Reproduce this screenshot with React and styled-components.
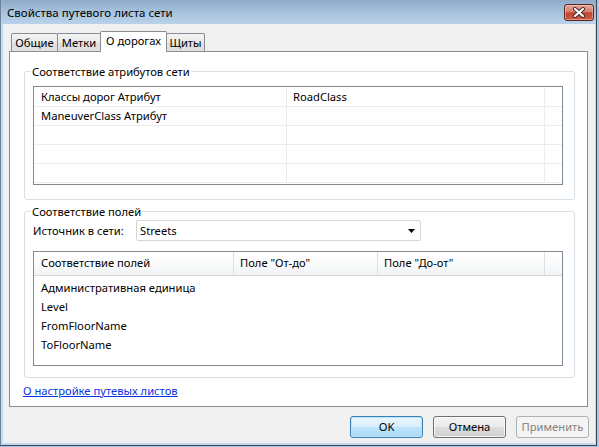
import React from "react";
import styled, { createGlobalStyle, css } from "styled-components";

const GlobalStyle = createGlobalStyle`
  html, body {
    margin: 0;
    padding: 0;
  }
  body {
    background: #a9c7e5;
    font-family: "Noto Sans", "Open Sans", "DejaVu Sans", sans-serif;
    font-size: 11.2px;
    color: #000;
  }
`;

const Frame = styled.div`
  width: 597px;
  height: 446px;
  box-sizing: border-box;
  display: flex;
  flex-direction: column;
  background: #c3d9ef;
  border-left: 1px solid #6f849a;
  border-right: 1px solid #3b4652;
  border-bottom: 1px solid #3b4652;
`;

const TitleBar = styled.div`
  height: 24px;
  flex: 0 0 24px;
  display: flex;
  justify-content: space-between;
  align-items: flex-start;
  padding: 0 2px 0 6px;
  background: linear-gradient(to bottom, #8fabc9 0%, #a9c4df 55%, #bad2ea 100%);
`;

const Title = styled.div`
  margin-top: 5px;
  line-height: 16px;
  font-size: 11.5px;
`;

const CloseButton = styled.div`
  margin-top: 4px;
  width: 30px;
  height: 17px;
  box-sizing: border-box;
  border: 1px solid #5a2626;
  border-radius: 3px;
  display: flex;
  align-items: center;
  justify-content: center;
  background: linear-gradient(to bottom, #e6a597 0%, #d8806f 45%, #c4442f 52%, #cd5a43 100%);
  box-shadow: inset 0 0 0 1px rgba(255, 220, 210, 0.45);
`;

const Body = styled.div`
  flex: 1;
  margin: 0 1px 2px 2px;
  padding: 7px 7px 0 6px;
  background: #f0f0f0;
  display: flex;
  flex-direction: column;
`;

const TabStrip = styled.div`
  display: flex;
  align-items: flex-end;
  height: 20px;
  padding-left: 2px;
  position: relative;
  z-index: 1;
`;

const Tab = styled.div`
  width: ${(p) => p.$w}px;
  height: 18px;
  box-sizing: border-box;
  margin-left: -1px;
  border: 1px solid #898c95;
  border-bottom: none;
  border-radius: 2px 2px 0 0;
  text-align: center;
  line-height: 17px;
  background: linear-gradient(to bottom, #f2f2f2 0%, #ebebeb 50%, #dedede 51%, #e2e2e2 100%);
  &:first-child {
    margin-left: 0;
  }
  ${(p) =>
    p.$active &&
    css`
      height: 21px;
      margin-bottom: -1px;
      background: #fff;
      line-height: 18px;
    `}
`;

const Panel = styled.div`
  height: 356px;
  box-sizing: border-box;
  border: 1px solid #898c95;
  background: #fff;
  padding: 12px 12px 0 14px;
`;

const Group = styled.fieldset`
  margin: ${(p) => (p.$first ? "0" : "4px 0 0")};
  min-width: 0;
  border: 1px solid #d5dfe5;
  border-radius: 3px;
  padding: ${(p) => (p.$first ? "7px 11px 14px 8px" : "1px 11px 11px 8px")};
`;

const Legend = styled.legend`
  padding: 0 1px;
  margin-left: -2px;
  line-height: 15px;
`;

const AttrGrid = styled.div`
  height: 99px;
  box-sizing: border-box;
  border: 1px solid #828790;
  padding-top: 1px;
  display: grid;
  grid-template-columns: 253px 258px 1fr;
  grid-auto-rows: 19px;
  align-content: start;
`;

const Cell = styled.div`
  box-sizing: border-box;
  border-right: 1px solid #ececec;
  border-bottom: 1px solid #ececec;
  padding-left: ${(p) => (p.$pad ? p.$pad : 7)}px;
  line-height: 18px;
  white-space: nowrap;
  &:nth-child(3n) {
    border-right: none;
    padding-left: 0;
  }
`;

const SourceRow = styled.div`
  display: grid;
  grid-template-columns: 103px 285px;
  align-items: center;
  height: 21px;
`;

const Combo = styled.div`
  height: 21px;
  box-sizing: border-box;
  border: 1px solid #d3d6da;
  border-radius: 2px;
  background: #fff;
  display: flex;
  align-items: center;
  justify-content: space-between;
  padding: 0 4px 0 3px;
`;

const FieldGrid = styled.div`
  margin-top: 10px;
  height: 115px;
  box-sizing: border-box;
  border: 1px solid #828790;
`;

const HeaderRow = styled.div`
  display: grid;
  grid-template-columns: 200px 144px 167px 1fr;
  height: 24px;
  box-sizing: border-box;
  border-bottom: 1px solid #d5d5d5;
  background: linear-gradient(to bottom, #ffffff 0%, #fafbfb 50%, #f1f2f4 100%);
`;

const HeaderCell = styled.div`
  border-right: 1px solid #dcdfe3;
  padding-left: ${(p) => (p.$pad ? p.$pad : 6)}px;
  line-height: 22px;
  white-space: nowrap;
  &:last-child {
    border-right: none;
  }
`;

const FieldList = styled.div`
  padding-top: 2px;
`;

const FieldRow = styled.div`
  height: 19px;
  line-height: 19px;
  padding-left: 7px;
`;

const HelpLink = styled.a`
  display: inline-block;
  margin-top: 5px;
  margin-left: -1px;
  line-height: 15px;
  color: #0a33e0;
  text-decoration: underline;
  cursor: pointer;
`;

const ButtonBar = styled.div`
  display: flex;
  justify-content: flex-end;
  gap: 10px;
  padding-top: 9px;
  margin-right: -1px;
`;

const Button = styled.div`
  width: 73px;
  height: 22px;
  box-sizing: border-box;
  border: 1px solid #707070;
  border-radius: 3px;
  text-align: center;
  line-height: 20px;
  background: linear-gradient(to bottom, #f2f2f2 0%, #ebebeb 50%, #dddddd 51%, #cfcfcf 100%);
  box-shadow: inset 0 0 0 1px rgba(255, 255, 255, 0.7);
  ${(p) =>
    p.$primary &&
    css`
      border-color: #3c7fb1;
      background: linear-gradient(to bottom, #eaf6fd 0%, #d9f0fc 50%, #bee6fd 51%, #a7d9f5 100%);
      box-shadow: inset 0 0 0 1px #b5e6fb;
    `}
  ${(p) =>
    p.$disabled &&
    css`
      border-color: #adb2b5;
      background: #f4f4f4;
      color: #838383;
      box-shadow: none;
    `}
`;

const attrRows = [
  ["Классы дорог Атрибут", "RoadClass"],
  ["ManeuverClass Атрибут", ""],
  ["", ""],
  ["", ""],
  ["", ""],
];

const fields = ["Административная единица", "Level", "FromFloorName", "ToFloorName"];

const tabs = [
  { label: "Общие", w: 47 },
  { label: "Метки", w: 44 },
  { label: "О дорогах", w: 67, active: true },
  { label: "Щиты", w: 39 },
];

export default function App() {
  return (
    <>
      <GlobalStyle />
      <Frame>
        <TitleBar>
          <Title>Свойства путевого листа сети</Title>
          <CloseButton>
            <svg width="14" height="11" viewBox="0 0 14 11">
              <path d="M3 2 L11 9 M11 2 L3 9" stroke="#3a2a2a" strokeWidth="4" strokeLinecap="round" />
              <path d="M3 2 L11 9 M11 2 L3 9" stroke="#fff" strokeWidth="2.2" strokeLinecap="round" />
            </svg>
          </CloseButton>
        </TitleBar>
        <Body>
          <TabStrip>
            {tabs.map((t) => (
              <Tab key={t.label} $w={t.w} $active={t.active}>
                {t.label}
              </Tab>
            ))}
          </TabStrip>
          <Panel>
            <Group $first>
              <Legend>Соответствие атрибутов сети</Legend>
              <AttrGrid>
                {attrRows.map((r, i) => (
                  <React.Fragment key={i}>
                    <Cell>{r[0]}</Cell>
                    <Cell $pad={6}>{r[1]}</Cell>
                    <Cell />
                  </React.Fragment>
                ))}
              </AttrGrid>
            </Group>
            <Group>
              <Legend>Соответствие полей</Legend>
              <SourceRow>
                <span>Источник в сети:</span>
                <Combo>
                  <span>Streets</span>
                  <svg width="8" height="4" viewBox="0 0 8 4">
                    <polygon points="0,0 7,0 3.5,4" fill="#000" />
                  </svg>
                </Combo>
              </SourceRow>
              <FieldGrid>
                <HeaderRow>
                  <HeaderCell $pad={7}>Соответствие полей</HeaderCell>
                  <HeaderCell>Поле "От-до"</HeaderCell>
                  <HeaderCell>Поле "До-от"</HeaderCell>
                  <HeaderCell />
                </HeaderRow>
                <FieldList>
                  {fields.map((f) => (
                    <FieldRow key={f}>{f}</FieldRow>
                  ))}
                </FieldList>
              </FieldGrid>
            </Group>
            <HelpLink>О настройке путевых листов</HelpLink>
          </Panel>
          <ButtonBar>
            <Button $primary>OK</Button>
            <Button>Отмена</Button>
            <Button $disabled>Применить</Button>
          </ButtonBar>
        </Body>
      </Frame>
    </>
  );
}
